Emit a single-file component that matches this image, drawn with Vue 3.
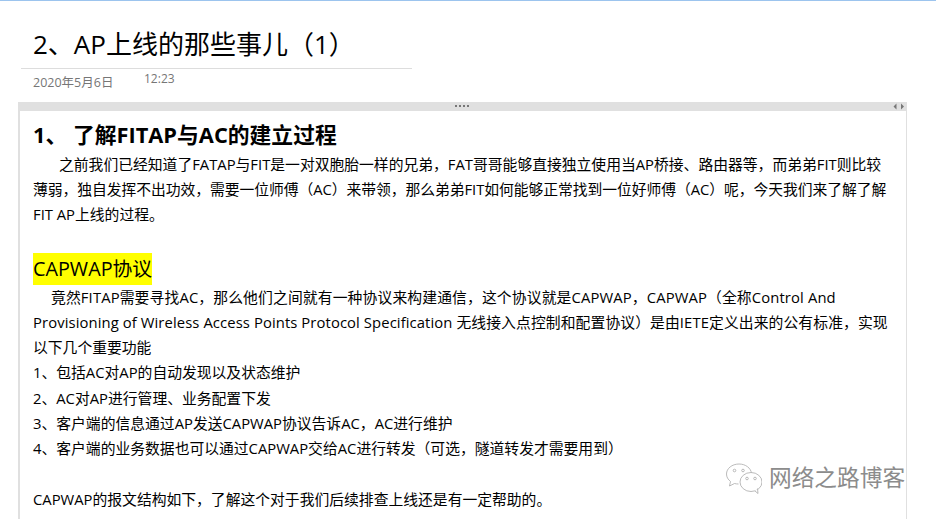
<template>
  <div class="page">
    <header class="head">
      <h1 class="title">2、AP上线的那些事儿（1）</h1>
      <div class="meta">
        <span class="date">2020年5月6日</span>
        <span class="time">12:23</span>
      </div>
    </header>
    <section class="pane">
      <div class="bar">
        <span class="grip"><i></i><i></i><i></i><i></i></span>
        <span class="arrows">
          <svg width="12" height="7" viewBox="0 0 12 7"><path d="M3.500 0.500v6L0.500 3.500zM8 0.500v6l3-3z" fill="#777" /></svg>
        </span>
      </div>
      <div class="body">
        <h2 class="h">1、 了解FITAP与AC的建立过程</h2>
        <div class="para first">
          <span class="ln indent1">之前我们已经知道了FATAP与FIT是一对双胞胎一样的兄弟，FAT哥哥能够直接独立使用当AP桥接、路由器等，而弟弟FIT则比较</span>
          <span class="ln tight">薄弱，独自发挥不出功效，需要一位师傅（AC）来带领，那么弟弟FIT如何能够正常找到一位好师傅（AC）呢，今天我们来了解了解</span>
          <p>FIT AP上线的过程。</p>
        </div>
        <div class="sub"><mark>CAPWAP协议</mark></div>
        <div class="para">
          <span class="ln indent2 wide1">竟然FITAP需要寻找AC，那么他们之间就有一种协议来构建通信，这个协议就是CAPWAP，CAPWAP（全称Control And</span>
          <span class="ln wide2">Provisioning of Wireless Access Points Protocol Specification 无线接入点控制和配置协议）是由IETE定义出来的公有标准，实现</span>
          <p>以下几个重要功能</p>
        </div>
        <p>1、包括AC对AP的自动发现以及状态维护</p>
        <p>2、AC对AP进行管理、业务配置下发</p>
        <p>3、客户端的信息通过AP发送CAPWAP协议告诉AC，AC进行维护</p>
        <p>4、客户端的业务数据也可以通过CAPWAP交给AC进行转发（可选，隧道转发才需要用到）</p>
        <p class="gap">CAPWAP的报文结构如下，了解这个对于我们后续排查上线还是有一定帮助的。</p>
      </div>
    </section>
    <div class="mark-wx">
      <svg width="37" height="32" viewBox="0 0 37 32" fill="none" stroke="#aaa" stroke-width="0.8">
        <path d="M14 2C7 2 1.500 6.500 1.500 12c0 3 1.500 5.500 4 7.500L4.500 24l5-2.500c1.200.3 2.500.5 4 .5" fill="#fff" />
        <path d="M14 2c6.500 0 12 4 12.500 9.500" />
        <ellipse cx="26" cy="20" rx="11" ry="9.500" fill="#fff" />
        <path d="M30 29l3 2.500-.5-5" fill="#fff" />
        <circle cx="9.500" cy="8.500" r="1.300" />
        <circle cx="18" cy="8.500" r="1.300" />
        <circle cx="22" cy="16.500" r="1.300" />
        <circle cx="30" cy="16.500" r="1.300" />
      </svg>
      <span>网络之路博客</span>
    </div>
  </div>
</template>

<script setup>
</script>

<style>
html, body { margin: 0; padding: 0; background: #fff; overflow: hidden; }
</style>

<style scoped>
.page {
  position: relative;
  width: 936px;
  height: 519px;
  overflow: hidden;
  box-sizing: border-box;
  border-top: 1px solid #9cc4ee;
  font-family: "Open Sans", "Noto Sans CJK SC", sans-serif;
  color: #000;
  background: #fff;
}
.head { margin-left: 21px; width: 391px; padding-top: 24px; }
.title {
  margin: 0;
  padding: 0 0 5px 12px;
  height: 38px;
  font-size: 26px;
  line-height: 38px;
  font-weight: 400;
  border-bottom: 1px solid #ddd;
  white-space: nowrap;
}
.meta { position: relative; height: 33px; color: #767676; }
.date { position: absolute; left: 12px; top: 5px; line-height: 18px; font-size: 12.500px; }
.time { position: absolute; left: 123px; top: 1px; line-height: 18px; font-size: 12px; }
.pane { margin-left: 18px; width: 889px; }
.bar {
  position: relative;
  height: 9px;
  background: #e0e0e0;
}
.grip { position: absolute; left: 437px; top: 3px; display: flex; gap: 2px; }
.grip i { display: block; width: 2px; height: 2px; background: #777; }
.arrows { position: absolute; right: 2px; top: 1px; line-height: 0; }
.body {
  border-left: 2px solid #e0e0e0;
  border-right: 1px solid #e0e0e0;
  padding: 0 10px 0 13px;
  height: 420px;
  font-size: 14.800px;
  line-height: 25.170px;
}
.h { margin: 0; padding-top: 9px; font-size: 21.800px; line-height: 30px; font-weight: 700; white-space: nowrap; }
p { margin: 0; }
.ln { display: block; white-space: nowrap; }
.tight { letter-spacing: -0.050px; }
.wide1 { letter-spacing: 0.130px; }
.wide2 { letter-spacing: 0.100px; }
.indent1 { text-indent: 26px; }
.indent2 { text-indent: 18px; }
.first { margin-top: 2px; }
.sub { margin-top: 25px; height: 32.400px; font-size: 19.800px; line-height: 32px; }
mark { display: inline-block; background: #ff0; color: #000; height: 32px; }
.gap { margin-top: 25.600px; }
.mark-wx {
  position: absolute;
  left: 725px;
  top: 461px;
  display: flex;
  align-items: center;
  gap: 7px;
  color: #8c8c8c;
  font-size: 22.700px;
  line-height: 32px;
  white-space: nowrap;
}
</style>
